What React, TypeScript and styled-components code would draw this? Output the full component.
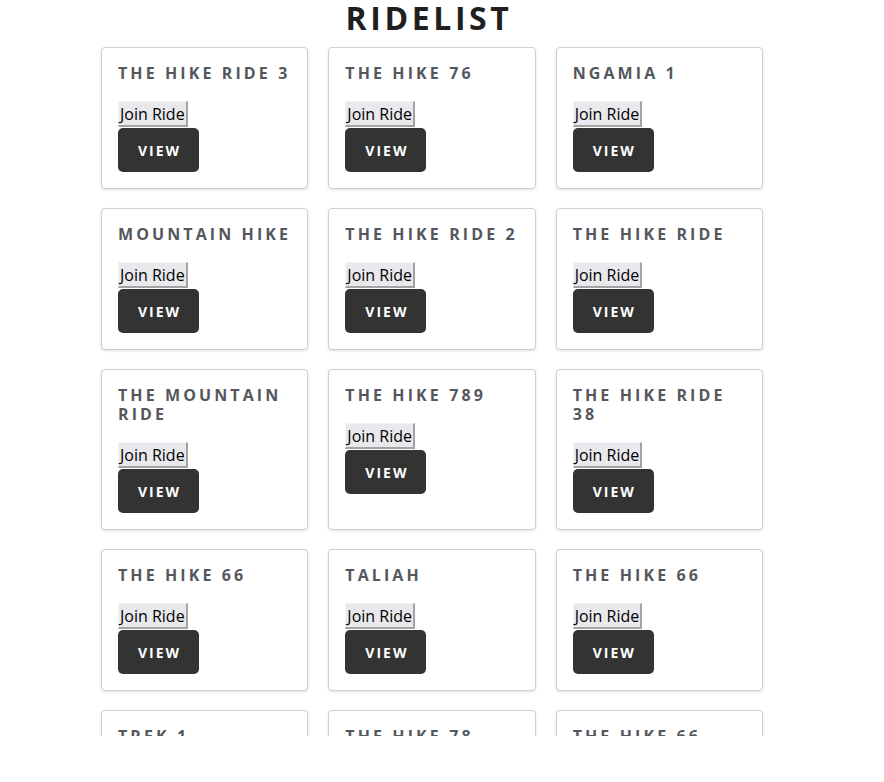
import styled, { createGlobalStyle } from 'styled-components';

const rides = [
  'The Hike Ride 3',
  'The Hike 76',
  'Ngamia 1',
  'Mountain Hike',
  'The Hike Ride 2',
  'The Hike Ride',
  'The Mountain Ride',
  'The Hike 789',
  'The Hike Ride 38',
  'The Hike 66',
  'Taliah',
  'The Hike 66',
  'Trek 1',
  'The Hike 78',
  'The Hike 66',
];

function App() {
  return (
    <>
      <GlobalStyle />
      <Page>
        <Heading>RideList</Heading>
        <ScrollArea>
          <Grid>
            {rides.map((name, i) => (
              <Card key={i}>
                <RideName>{name}</RideName>
                <Actions>
                  <JoinButton type="button">Join Ride</JoinButton>
                  <ViewButton type="button">View</ViewButton>
                </Actions>
              </Card>
            ))}
          </Grid>
        </ScrollArea>
      </Page>
    </>
  );
}

export default App;

const GlobalStyle = createGlobalStyle`
  * {
    box-sizing: border-box;
  }
  body {
    margin: 0;
    background: #ffffff;
    font-family: 'Open Sans', 'Noto Sans', sans-serif;
  }
`;

const Page = styled.div`
  padding: 0 20px 0 0;
`;

const Heading = styled.h1`
  margin: 0 0 11px;
  padding-right: 6px;
  font-size: 32px;
  line-height: 36px;
  font-weight: 700;
  text-align: center;
  text-transform: uppercase;
  letter-spacing: 3.6px;
  color: #1f1f1f;
`;

const ScrollArea = styled.div`
  height: 689px;
  overflow-y: auto;
  scrollbar-width: none;

  &::-webkit-scrollbar {
    display: none;
  }
`;

const Grid = styled.div`
  width: 662px;
  margin: 0 auto;
  padding-bottom: 24px;
  display: grid;
  grid-template-columns: repeat(3, 1fr);
  column-gap: 20px;
  row-gap: 19px;
`;

const Card = styled.div`
  border: 1px solid #cfcfcf;
  border-radius: 4px;
  box-shadow: 0 1px 3px rgba(0, 0, 0, 0.12);
  padding: 16px 8px 16px 16px;
  background: #ffffff;
`;

const RideName = styled.h3`
  margin: 0 0 18px;
  font-size: 16px;
  line-height: 19px;
  font-weight: 700;
  text-transform: uppercase;
  letter-spacing: 3.1px;
  color: #54585d;
`;

const Actions = styled.div`
  display: flex;
  flex-direction: column;
  align-items: flex-start;
  gap: 1px;
`;

const JoinButton = styled.button`
  font-family: inherit;
  font-size: 16px;
  line-height: 22px;
  color: #000000;
  background: #e9e9ed;
  padding: 1px 1px 0;
  border-style: solid;
  border-width: 1px 2px 2px 1px;
  border-color: #f4f4f6 #a3a3a3 #a3a3a3 #f4f4f6;
  border-radius: 0;
  cursor: pointer;
`;

const ViewButton = styled.button`
  font-family: inherit;
  height: 44px;
  padding: 0 18px 0 20px;
  border: none;
  border-radius: 5px;
  background: #333333;
  color: #ffffff;
  font-size: 14px;
  font-weight: 700;
  text-transform: uppercase;
  letter-spacing: 2px;
  cursor: pointer;
`;
